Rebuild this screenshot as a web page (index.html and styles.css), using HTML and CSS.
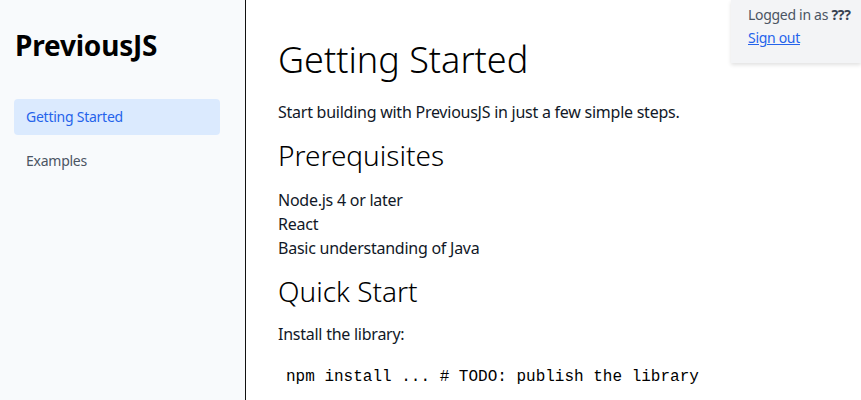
FILE: index.html
```html
<!DOCTYPE html>
<html>
<head>
<meta charset="utf-8">
<link rel="stylesheet" href="styles.css">
</head>
<body>
<div class="layout">
  <aside class="sidebar">
    <div class="brand">PreviousJS</div>
    <nav class="nav">
      <a class="nav-item active">Getting Started</a>
      <a class="nav-item">Examples</a>
    </nav>
  </aside>
  <main class="content">
    <h1>Getting Started</h1>
    <p class="lead">Start building with PreviousJS in just a few simple steps.</p>
    <h2>Prerequisites</h2>
    <ul class="prereq">
      <li>Node.js 4 or later</li>
      <li>React</li>
      <li>Basic understanding of Java</li>
    </ul>
    <h2>Quick Start</h2>
    <p class="step">Install the library:</p>
    <pre class="code">npm install ... # TODO: publish the library</pre>
  </main>
</div>
<div class="session">
  <div class="session-line">Logged in as <b>???</b></div>
  <a class="signout" href="#">Sign out</a>
</div>
</body>
</html>
```
FILE: styles.css
```css
html, body {
  margin: 0;
  padding: 0;
  height: 100%;
}
body {
  font-family: "Noto Sans", "Open Sans", sans-serif;
  color: #111827;
  background: #ffffff;
  overflow: hidden;
}
.layout {
  display: flex;
  height: 400px;
}
.sidebar {
  width: 246px;
  flex: none;
  background: #f8fafc;
  border-right: 1px solid #111;
  padding: 27px 25px 0 14px;
  box-sizing: border-box;
}
.brand {
  font-size: 28px;
  font-weight: 700;
  color: #000;
  padding-left: 1px;
  line-height: 36px;
  letter-spacing: -0.2px;
}
.nav {
  display: flex;
  flex-direction: column;
  margin-top: 36px;
  gap: 8px;
}
.nav-item {
  display: block;
  padding: 0 12px;
  height: 36px;
  line-height: 36px;
  font-size: 14px;
  letter-spacing: -0.25px;
  color: #4b5563;
  border-radius: 4px;
}
.nav-item.active {
  background: #dbeafe;
  color: #2563eb;
}
.content {
  flex: 1;
  padding: 32px 32px 0 32px;
}
h1 {
  font-size: 36px;
  font-weight: 300;
  margin: 0;
  line-height: 56px;
  color: #000;
}
.lead {
  margin: 12px 0 0;
  font-size: 16px;
  line-height: 24px;
  letter-spacing: -0.25px;
}
h2 {
  font-size: 28px;
  font-weight: 300;
  margin: 11px 0 0;
  line-height: 40px;
  color: #000;
}
.prereq {
  list-style: none;
  padding: 0;
  margin: 13px 0 0;
  font-size: 16px;
  line-height: 24px;
  letter-spacing: -0.25px;
}
.step {
  margin: 11px 0 0;
  font-size: 16px;
  line-height: 24px;
  letter-spacing: -0.25px;
}
.code {
  margin: 19px 0 0;
  padding: 0 8px;
  font-family: "Liberation Mono", monospace;
  font-size: 16px;
  line-height: 24px;
  color: #000;
}
.session {
  position: absolute;
  top: 0;
  right: 0;
  width: 130px;
  height: 63px;
  box-sizing: border-box;
  padding: 3px 0 0 17px;
  background: #f3f4f6;
  box-shadow: 0 2px 4px rgba(0,0,0,0.12);
  font-size: 14px;
  letter-spacing: -0.3px;
  line-height: 23px;
  color: #4b5563;
  white-space: nowrap;
}
.session b {
  color: #374151;
}
.signout {
  color: #2563eb;
  text-decoration: underline;
}
```
